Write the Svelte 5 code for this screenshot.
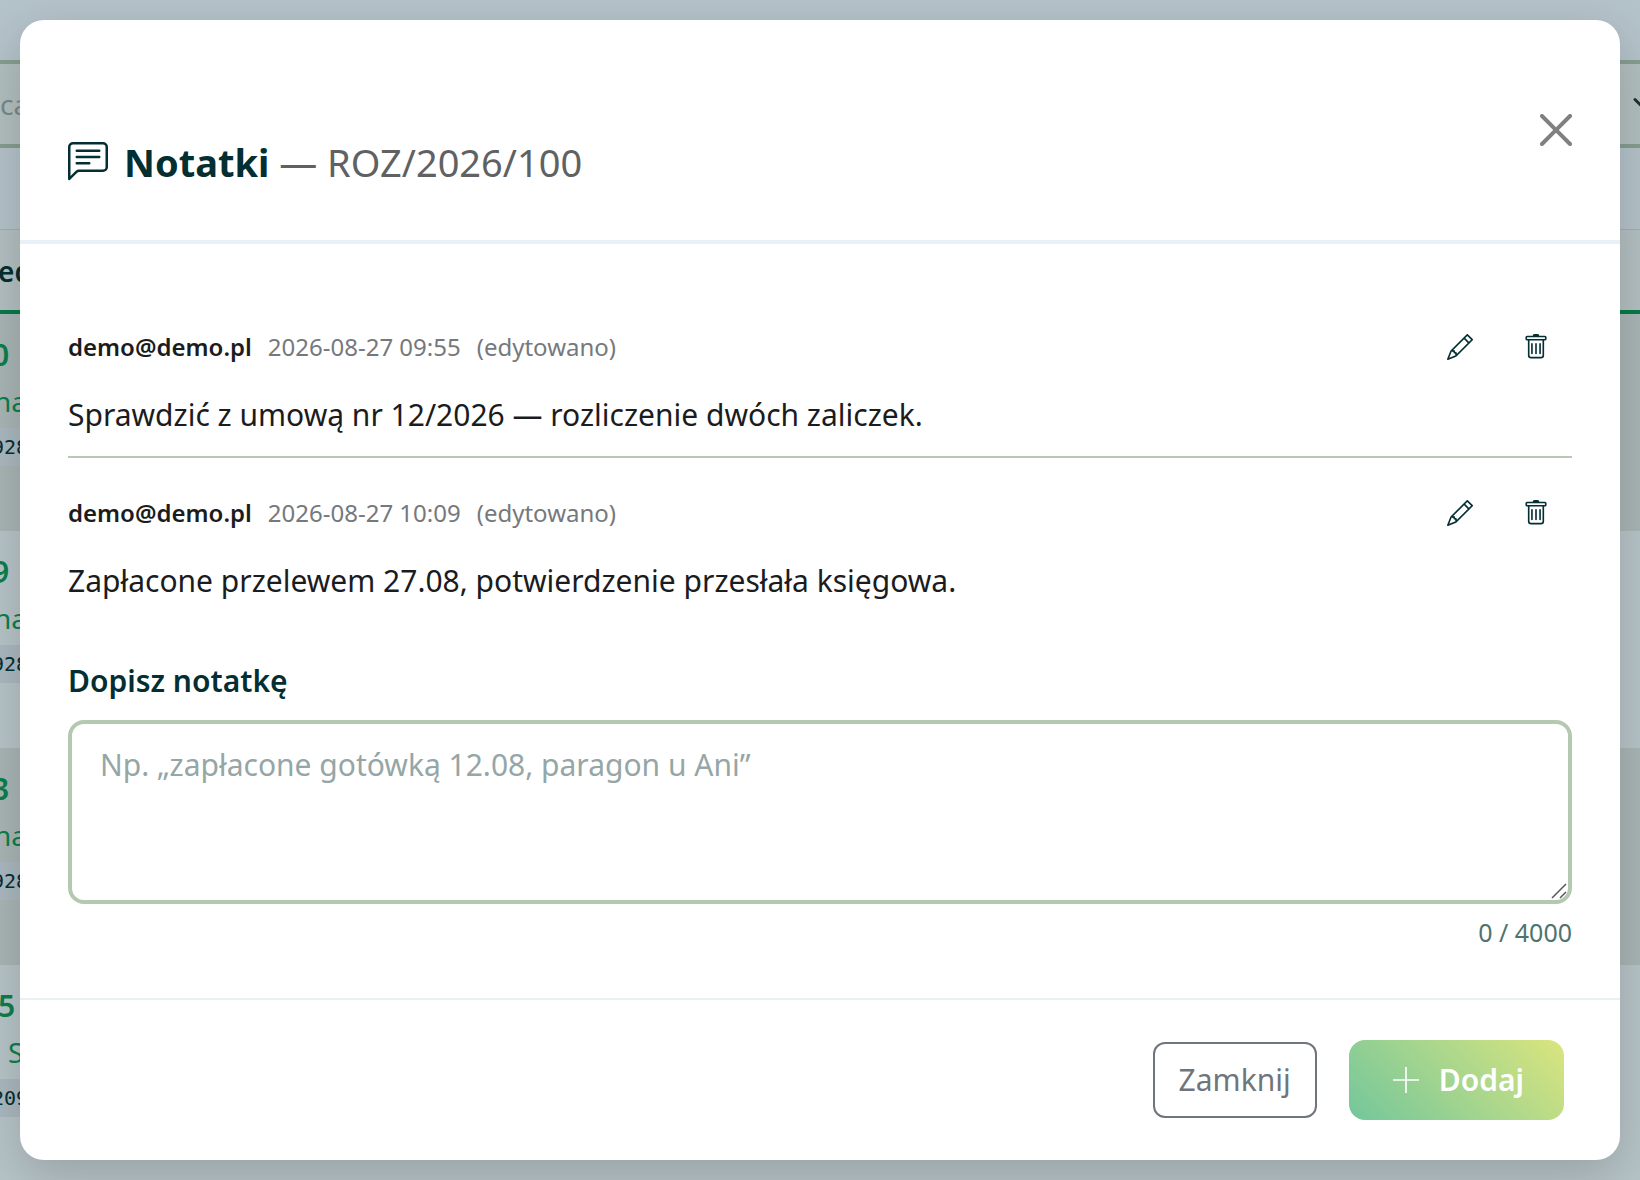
<script>
  const maxLength = 4000;

  const notes = [
    {
      author: "demo@demo.pl",
      date: "2026-08-27 09:55",
      text: "Sprawdzić z umową nr 12/2026 — rozliczenie dwóch zaliczek.",
    },
    {
      author: "demo@demo.pl",
      date: "2026-08-27 10:09",
      text: "Zapłacone przelewem 27.08, potwierdzenie przesłała księgowa.",
    },
  ];

  const rows = [
    { number: "0", name: "na", code: "928" },
    { number: "9", name: "na", code: "928" },
    { number: "3", name: "na", code: "928" },
    { number: "5", name: "S", code: "209", shifted: true },
  ];

  let draft = $state("");
</script>

<div class="page">
  <!-- settlements list under the dialog -->
  <div class="list" aria-hidden="true">
    <div class="filter">
      <span>ca</span>
      <svg class="chevron" viewBox="0 0 16 16"><path d="m2 5 6 6 6-6" /></svg>
    </div>
    <div class="list-head">ed</div>
    {#each rows as row}
      <div class="list-row" class:shifted={row.shifted}>
        <div class="number">{row.number}</div>
        <div class="name">{row.name}</div>
        <code>{row.code}</code>
      </div>
    {/each}
  </div>

  <div class="modal" role="dialog" aria-modal="true" aria-labelledby="notes-title">
    <header>
      <h1 id="notes-title">
        <svg class="title-icon" viewBox="0 0 16 16" aria-hidden="true">
          <path d="M14 1a1 1 0 0 1 1 1v8a1 1 0 0 1-1 1H4.414A2 2 0 0 0 3 11.586l-2 2V2a1 1 0 0 1 1-1zM2 0a2 2 0 0 0-2 2v12.793a.5.5 0 0 0 .854.353l2.853-2.853A1 1 0 0 1 4.414 12H14a2 2 0 0 0 2-2V2a2 2 0 0 0-2-2z" />
          <path d="M3 3.5a.5.5 0 0 1 .5-.5h9a.5.5 0 0 1 0 1h-9a.5.5 0 0 1-.5-.5M3 6a.5.5 0 0 1 .5-.5h9a.5.5 0 0 1 0 1h-9A.5.5 0 0 1 3 6m0 2.5a.5.5 0 0 1 .5-.5h5a.5.5 0 0 1 0 1h-5a.5.5 0 0 1-.5-.5" />
        </svg>
        <span>Notatki <span class="subject">— ROZ/2026/100</span></span>
      </h1>
      <button type="button" class="close" aria-label="Zamknij okno">
        <svg viewBox="0 0 16 16" aria-hidden="true">
          <path d="M.293.293a1 1 0 0 1 1.414 0L8 6.586 14.293.293a1 1 0 1 1 1.414 1.414L9.414 8l6.293 6.293a1 1 0 0 1-1.414 1.414L8 9.414l-6.293 6.293a1 1 0 0 1-1.414-1.414L6.586 8 .293 1.707a1 1 0 0 1 0-1.414" />
        </svg>
      </button>
    </header>

    <div class="body">
      <ul>
        {#each notes as note}
          <li>
            <div class="meta">
              <strong>{note.author}</strong>
              <span>{note.date}</span>
              <span>(edytowano)</span>
              <div class="actions">
                <button type="button" aria-label="Edytuj">
                  <svg viewBox="0 0 16 16" aria-hidden="true">
                    <path d="M12.146.146a.5.5 0 0 1 .708 0l3 3a.5.5 0 0 1 0 .708l-10 10a.5.5 0 0 1-.168.11l-5 2a.5.5 0 0 1-.65-.65l2-5a.5.5 0 0 1 .11-.168zM11.207 2.5 13.5 4.793 14.793 3.5 12.5 1.207zm1.586 3L10.5 3.207 4 9.707V10h.5a.5.5 0 0 1 .5.5v.5h.5a.5.5 0 0 1 .5.5v.5h.293zm-9.761 5.175-.106.106-1.528 3.821 3.821-1.528.106-.106A.5.5 0 0 1 5 12.5V12h-.5a.5.5 0 0 1-.5-.5V11h-.5a.5.5 0 0 1-.468-.325" />
                  </svg>
                </button>
                <button type="button" aria-label="Usuń">
                  <svg viewBox="0 0 16 16" aria-hidden="true">
                    <path d="M5.5 5.5A.5.5 0 0 1 6 6v6a.5.5 0 0 1-1 0V6a.5.5 0 0 1 .5-.5m2.5 0a.5.5 0 0 1 .5.5v6a.5.5 0 0 1-1 0V6a.5.5 0 0 1 .5-.5m3 .5a.5.5 0 0 0-1 0v6a.5.5 0 0 0 1 0z" />
                    <path d="M14.5 3a1 1 0 0 1-1 1H13v9a2 2 0 0 1-2 2H5a2 2 0 0 1-2-2V4h-.5a1 1 0 0 1-1-1V2a1 1 0 0 1 1-1H6a1 1 0 0 1 1-1h2a1 1 0 0 1 1 1h3.5a1 1 0 0 1 1 1zM4.118 4 4 4.059V13a1 1 0 0 0 1 1h6a1 1 0 0 0 1-1V4.059L11.882 4zM2.5 3h11V2h-11z" />
                  </svg>
                </button>
              </div>
            </div>
            <p>{note.text}</p>
          </li>
        {/each}
      </ul>

      <label for="draft">Dopisz notatkę</label>
      <div class="field">
        <textarea
          id="draft"
          maxlength={maxLength}
          placeholder="Np. „zapłacone gotówką 12.08, paragon u Ani”"
          bind:value={draft}
        ></textarea>
        <svg class="grip" viewBox="0 0 16 16" aria-hidden="true"><path d="M1 15 15 1M9 15l6-6" /></svg>
      </div>
      <div class="counter">{draft.length} / {maxLength}</div>
    </div>

    <footer>
      <button type="button" class="cancel">Zamknij</button>
      <button type="button" class="add">
        <svg viewBox="0 0 16 16" aria-hidden="true"><path d="M8 0v16M0 8h16" /></svg>
        Dodaj
      </button>
    </footer>
  </div>
</div>

<style>
  :global(body) {
    margin: 0;
  }

  .page {
    display: grid;
    min-height: 100vh;
    overflow: hidden;
    background: #b4c2c9;
    color: #1a1c1e;
    font-family: "Segoe UI", "Noto Sans", "Open Sans", sans-serif;
    font-size: 30px;
    line-height: 50px;
  }

  .list,
  .modal {
    grid-area: 1 / 1;
    min-width: 0;
  }

  button {
    padding: 0;
    border: 0;
    background: none;
    color: inherit;
    font: inherit;
    cursor: pointer;
  }

  svg {
    display: block;
    fill: currentColor;
  }

  /* List */
  .list {
    height: 100vh;
    box-sizing: border-box;
    padding-top: 60px;
    overflow: hidden;
  }

  .filter {
    display: flex;
    justify-content: space-between;
    align-items: center;
    height: 80px;
    border: solid #869d8f;
    border-width: 4px 0;
    background: #b2bfbf;
    color: #768a8b;
    font-size: 28px;
  }

  .chevron {
    width: 24px;
    height: 24px;
    margin-right: -16px;
    fill: none;
    stroke: #24302f;
    stroke-width: 2;
    stroke-linecap: round;
  }

  .list-head {
    height: 80px;
    margin-top: 81px;
    border-top: 1px solid #a1afb2;
    border-bottom: 4px solid #067a46;
    background: #b3bfc1;
    color: #032f33;
    font-size: 28px;
    font-weight: 600;
    line-height: 82px;
    text-indent: -2px;
  }

  .list-row {
    box-sizing: border-box;
    height: 217px;
    padding-top: 16px;
    background: #b7c4c7;
    color: #0b7f4a;
    text-indent: -8px;
  }

  .list-row:nth-child(odd) {
    background: #a9b5b5;
  }

  .number {
    font-weight: 600;
  }

  .name {
    font-size: 28px;
    line-height: 42px;
    text-indent: -6px;
  }

  .shifted .number {
    text-indent: -2px;
  }

  .shifted .name {
    text-indent: 8px;
  }

  code {
    display: block;
    width: 60px;
    margin-top: 6px;
    background: #abb8bf;
    color: #032f33;
    font-family: Consolas, "DejaVu Sans Mono", monospace;
    font-size: 20px;
    line-height: 38px;
  }

  /* Dialog */
  .modal {
    position: relative;
    align-self: start;
    margin: 20px;
    border-radius: 24px;
    background: #fff;
    box-shadow: 0 16px 48px rgba(0, 0, 0, 0.175);
  }

  header {
    display: flex;
    justify-content: space-between;
    align-items: flex-start;
    padding: 94px 48px 48px;
    border-bottom: 4px solid #e8f0f8;
  }

  h1 {
    display: flex;
    align-items: flex-start;
    gap: 16px;
    margin: 18px 0 0;
    color: #032f33;
    font-size: 38px;
    font-weight: 700;
    line-height: 60px;
  }

  .title-icon {
    width: 40px;
    height: 40px;
    margin-top: 10px;
  }

  .subject {
    color: #5f6162;
    font-weight: 400;
  }

  .close {
    color: #808080;
  }

  .close svg {
    width: 32px;
    height: 32px;
  }

  .body {
    padding: 48px 48px 46px;
  }

  ul {
    margin: 0 0 34px;
    padding: 0;
    list-style: none;
  }

  li {
    padding: 16px 0;
  }

  li + li {
    border-top: 2px solid #b6cab2;
  }

  .meta {
    display: flex;
    align-items: center;
    gap: 16px;
    height: 78px;
    color: #75797d;
    font-size: 24px;
  }

  .meta strong {
    color: #1a1c1e;
    font-weight: 600;
  }

  .actions {
    display: flex;
    gap: 4px;
    margin-left: auto;
    color: #032f33;
  }

  .actions button {
    display: grid;
    place-items: center;
    width: 72px;
    height: 72px;
  }

  .actions svg {
    width: 26px;
    height: 26px;
  }

  p {
    margin: 4px 0 0;
  }

  label {
    display: block;
    margin-bottom: 14px;
    color: #032f33;
    font-weight: 600;
  }

  .field {
    position: relative;
  }

  textarea {
    display: block;
    box-sizing: border-box;
    width: 100%;
    height: 184px;
    padding: 16px 28px;
    border: 4px solid #b5c9b1;
    border-radius: 16px;
    background: #fff;
    color: inherit;
    font: inherit;
    resize: none;
  }

  textarea::placeholder {
    color: #95a6a6;
    opacity: 1;
  }

  .grip {
    position: absolute;
    right: 5px;
    bottom: 5px;
    width: 16px;
    height: 16px;
    fill: none;
    stroke: #55585a;
    stroke-width: 1.5;
    pointer-events: none;
  }

  .counter {
    margin-top: 8px;
    color: #4f736e;
    font-size: 25px;
    line-height: 40px;
    text-align: right;
  }

  footer {
    display: flex;
    justify-content: flex-end;
    align-items: center;
    gap: 32px;
    padding: 40px 56px;
    border-top: 2px solid #e9f1f2;
  }

  .cancel {
    height: 76px;
    padding: 0 24px;
    border: 2px solid #70757c;
    border-radius: 12px;
    color: #70757c;
  }

  .add {
    display: flex;
    align-items: center;
    gap: 20px;
    height: 80px;
    padding: 0 40px 0 44px;
    border-radius: 16px;
    background: linear-gradient(45deg, #73c69c, #dbe57e);
    color: #fff;
    font-weight: 600;
  }

  .add svg {
    width: 26px;
    height: 26px;
    stroke: currentColor;
    stroke-width: 1;
  }
</style>
